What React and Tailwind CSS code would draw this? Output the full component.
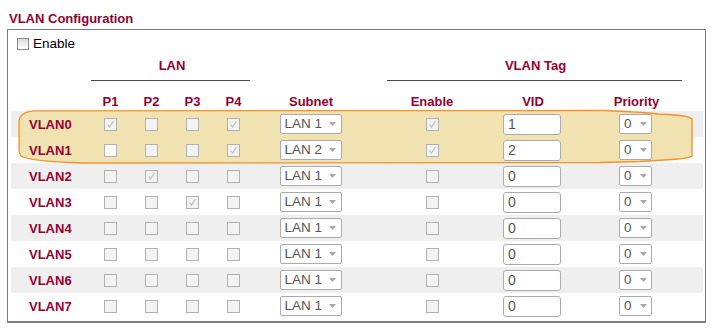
import React from "react";

const RED = "text-[#930036]";

function Check({ checked, white }) {
  return (
    <div
      className={`relative w-[13px] h-[13px] border border-[#b1b1b1] ${
        white ? "bg-white" : "bg-[#f3f3f3]"
      }`}
    >
      {checked && (
        <svg viewBox="0 0 11 11" className="absolute left-0 top-0 w-[11px] h-[11px]">
          <path d="M2.5 5.5 L4.5 8 L8.5 2" fill="none" stroke="#bcbcbc" strokeWidth="1.2" />
        </svg>
      )}
    </div>
  );
}

function Arrow() {
  return (
    <svg viewBox="0 0 7 4" className="w-[7px] h-[4px]">
      <path d="M0 0 L7 0 L3.5 4 Z" fill="#a8a8a8" />
    </svg>
  );
}

function Select({ value, w, gap }) {
  return (
    <div
      className={`flex items-center justify-between h-[20px] border border-[#ababab] rounded-[2px] bg-white pl-[4px] ${w} ${gap}`}
    >
      <span className="text-[13.5px] leading-none text-[#555]">{value}</span>
      <Arrow />
    </div>
  );
}

const rows = [
  { name: "VLAN0", p: [1, 0, 0, 1], subnet: "LAN 1", en: 1, vid: "1" },
  { name: "VLAN1", p: [0, 0, 0, 1], subnet: "LAN 2", en: 1, vid: "2", white: true },
  { name: "VLAN2", p: [0, 1, 0, 0], subnet: "LAN 1", en: 0, vid: "0" },
  { name: "VLAN3", p: [0, 0, 1, 0], subnet: "LAN 1", en: 0, vid: "0" },
  { name: "VLAN4", p: [0, 0, 0, 0], subnet: "LAN 1", en: 0, vid: "0" },
  { name: "VLAN5", p: [0, 0, 0, 0], subnet: "LAN 1", en: 0, vid: "0" },
  { name: "VLAN6", p: [0, 0, 0, 0], subnet: "LAN 1", en: 0, vid: "0" },
  { name: "VLAN7", p: [0, 0, 0, 0], subnet: "LAN 1", en: 0, vid: "0" },
];

const GRID = "grid grid-cols-[79px_41px_41px_41px_41px_114px_128px_74px_1fr]";

export default function App() {
  return (
    <div
      className="relative w-[712px] h-[336px] bg-white pl-[7px] pt-[11px]"
      style={{ fontFamily: '"Liberation Sans", Arial, sans-serif' }}
    >
      <svg
        className="absolute left-0 top-0 pointer-events-none"
        width="712"
        height="336"
        viewBox="0 0 712 336"
      >
        <path
          d="M34 110.8 L605 110.5 Q640 112 658 114 Q688 115 692 119 L692 156 Q689 158.5 672 159.5 L640 161.5 L600 162.5 L80 163 Q28 161 21 156 Q19 154 19 148 L19 122 Q19 112 34 110.8 Z"
          fill="#f0e2b1"
          stroke="#f5902a"
          strokeWidth="1.3"
        />
      </svg>

      <div className={`pl-[2px] text-[13px] leading-[15px] font-bold ${RED} mb-[3px]`}>
        VLAN Configuration
      </div>

      <div className="w-[699px] border border-b-2 border-[#7d7d7d] bg-white pl-[3px] pr-[2px] pb-[2px]">
        <div className="h-[28px] flex items-center pl-[6px]">
          <div className="relative w-[12px] h-[12px] border border-[#8a8a8a] bg-gradient-to-b from-[#dcdcdc] to-[#ffffff]" />
          <span className="relative ml-[4px] text-[13.5px] text-black leading-none">Enable</span>
        </div>

        <div className={GRID}>
          <div />
          <div className="col-span-4 flex flex-col">
            <div className={`relative text-center text-[13px] leading-[15px] font-bold ${RED}`}>LAN</div>
            <div className="mt-[7px] h-px bg-[#4a4a4a] ml-[1px] mr-[4px]" />
          </div>
          <div />
          <div className="col-span-3 flex flex-col">
            <div className={`relative text-center text-[13px] leading-[15px] font-bold ${RED}`}>VLAN Tag</div>
            <div className="mt-[7px] h-px bg-[#4a4a4a] ml-[19px] mr-[21px]" />
          </div>
        </div>

        <div className={`${GRID} h-[30px] pt-[13px] text-[13px] leading-[15px] font-bold ${RED} text-center`}>
          <div />
          <div className="relative">P1</div>
          <div className="relative">P2</div>
          <div className="relative">P3</div>
          <div className="relative">P4</div>
          <div className="relative">Subnet</div>
          <div className="relative">Enable</div>
          <div className="relative">VID</div>
          <div className="relative">Priority</div>
        </div>

        {rows.map((r, i) => (
          <div
            key={r.name}
            className={`${GRID} h-[26px] items-center ${i % 2 === 0 ? "bg-[#efefef]" : "bg-white"}`}
          >
            <div className={`relative pl-[18px] text-[13px] font-bold leading-none ${RED}`}>{r.name}</div>
            {r.p.map((c, j) => (
              <div key={j} className="relative flex justify-center">
                <Check checked={!!c} white={r.white && j === 0} />
              </div>
            ))}
            <div className="relative flex justify-center pr-[1px]">
              <Select value={r.subnet} w="w-[62px]" gap="pr-[5px]" />
            </div>
            <div className="relative flex justify-center">
              <Check checked={!!r.en} />
            </div>
            <div className="relative flex justify-center pr-[2px]">
              <div className="w-[58px] h-[21px] border border-[#ababab] rounded-[3px] bg-white pl-[4px] flex items-center text-[14px] leading-none text-[#555]">
                {r.vid}
              </div>
            </div>
            <div className="relative flex justify-center pr-[2px]">
              <Select value="0" w="w-[33px]" gap="pr-[4px]" />
            </div>
          </div>
        ))}
      </div>
    </div>
  );
}
